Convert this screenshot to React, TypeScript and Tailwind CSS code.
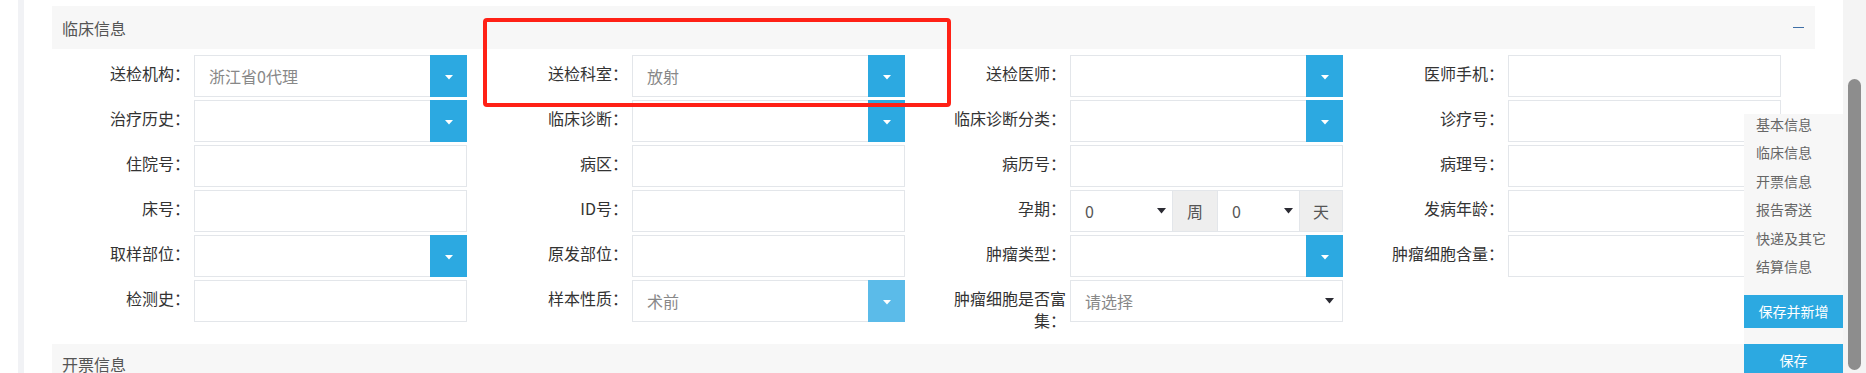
import React from 'react';

type Field =
  | { label: string; kind: 'text' }
  | { label: string; kind: 'dropdown'; value?: string; disabled?: boolean }
  | { label: string; kind: 'select'; placeholder: string }
  | { label: string; kind: 'pregnancy' }
  | { label: string; kind: 'empty' };

const rows: Field[][] = [
  [
    { label: '送检机构：', kind: 'dropdown', value: '浙江省0代理' },
    { label: '送检科室：', kind: 'dropdown', value: '放射' },
    { label: '送检医师：', kind: 'dropdown' },
    { label: '医师手机：', kind: 'text' },
  ],
  [
    { label: '治疗历史：', kind: 'dropdown' },
    { label: '临床诊断：', kind: 'dropdown' },
    { label: '临床诊断分类：', kind: 'dropdown' },
    { label: '诊疗号：', kind: 'text' },
  ],
  [
    { label: '住院号：', kind: 'text' },
    { label: '病区：', kind: 'text' },
    { label: '病历号：', kind: 'text' },
    { label: '病理号：', kind: 'text' },
  ],
  [
    { label: '床号：', kind: 'text' },
    { label: 'ID号：', kind: 'text' },
    { label: '孕期：', kind: 'pregnancy' },
    { label: '发病年龄：', kind: 'text' },
  ],
  [
    { label: '取样部位：', kind: 'dropdown' },
    { label: '原发部位：', kind: 'text' },
    { label: '肿瘤类型：', kind: 'dropdown' },
    { label: '肿瘤细胞含量：', kind: 'text' },
  ],
  [
    { label: '检测史：', kind: 'text' },
    { label: '样本性质：', kind: 'dropdown', value: '术前', disabled: true },
    { label: '肿瘤细胞是否富集：', kind: 'select', placeholder: '请选择' },
    { label: '', kind: 'empty' },
  ],
];

const navItems = ['基本信息', '临床信息', '开票信息', '报告寄送', '快递及其它', '结算信息'];

function WhiteCaret() {
  return (
    <svg width="8" height="5" viewBox="0 0 8 5" className="mt-[2px]">
      <path d="M0 0h8L4 4.5z" fill="#ffffff" />
    </svg>
  );
}

function DarkCaret() {
  return (
    <svg width="9" height="6" viewBox="0 0 9 6">
      <path d="M0 0h9L4.5 5.5z" fill="#2b2b33" />
    </svg>
  );
}

function Control({ field }: { field: Field }) {
  if (field.kind === 'empty') return null;

  if (field.kind === 'dropdown') {
    return (
      <div className="relative flex h-[42px] w-[273px] items-center border border-[#e3e6ea] bg-white">
        <span className="pl-[14px] text-[16px] text-[#888]">{field.value}</span>
        <div
          className={`absolute right-[-1px] top-[-1px] flex h-[42px] w-[37px] items-center justify-center ${
            field.disabled ? 'bg-[#5bbbe9]' : 'bg-[#2ca9e1]'
          }`}
        >
          <WhiteCaret />
        </div>
      </div>
    );
  }

  if (field.kind === 'select') {
    return (
      <div className="flex h-[42px] w-[273px] items-center justify-between border border-[#e3e6ea] bg-white pl-[14px] pr-[8px]">
        <span className="text-[16px] text-[#888]">{field.placeholder}</span>
        <DarkCaret />
      </div>
    );
  }

  if (field.kind === 'pregnancy') {
    return (
      <div className="flex h-[42px] w-[273px] border border-[#e3e6ea] bg-white">
        <div className="flex w-[101px] items-center justify-between pl-[14px] pr-[6px]">
          <span className="text-[16px] text-[#555]">0</span>
          <DarkCaret />
        </div>
        <div className="flex w-[46px] items-center justify-center border-x border-[#e3e6ea] bg-[#eeeeee] text-[16px] text-[#555]">
          周
        </div>
        <div className="flex w-[81px] items-center justify-between pl-[14px] pr-[6px]">
          <span className="text-[16px] text-[#555]">0</span>
          <DarkCaret />
        </div>
        <div className="flex flex-1 items-center justify-center border-l border-[#e3e6ea] bg-[#eeeeee] text-[16px] text-[#555]">
          天
        </div>
      </div>
    );
  }

  return <div className="h-[42px] w-[273px] border border-[#e3e6ea] bg-white" />;
}

export default function App() {
  return (
    <div
      className="relative flex h-[373px] w-full overflow-hidden bg-white"
      style={{ fontFamily: '"Noto Sans CJK SC", "Noto Sans", sans-serif' }}
    >
      {/* page edge */}
      <div className="w-[18px] shrink-0 bg-white" />
      <div className="w-[6px] shrink-0 bg-[#f1f2f5]" />

      <div className="flex-1 pl-[28px] pt-[6px]">
        {/* Section header */}
        <div className="flex h-[43px] w-[1763px] items-center justify-between bg-[#f7f7f7] pl-[10px] pr-[11px]">
          <span className="text-[16px] text-[#555]">临床信息</span>
          <div className="h-[1px] w-[11px] bg-[#3f6fa6]" />
        </div>

        {/* Form grid */}
        <div className="mt-[6px] grid w-[1752px] grid-cols-4 auto-rows-[42px] gap-y-[3px]">
          {rows.flat().map((field, i) => (
            <div key={i} className="flex items-start gap-[4px]">
              <label className="w-[138px] shrink-0 pt-[7px] text-right text-[16px] leading-[22px] text-[#333]">
                {field.label}
              </label>
              <Control field={field} />
            </div>
          ))}
        </div>

        <div className="mt-[22px] flex h-[43px] w-[1763px] items-start bg-[#f7f7f7] pl-[10px] pt-[9px]">
          <span className="text-[16px] leading-[22px] text-[#555]">开票信息</span>
        </div>
      </div>

      {/* Floating anchor nav */}
      <div className="absolute left-[1744px] top-[114px] flex h-[270px] w-[99px] flex-col bg-[#f7f7f7]">
        <div className="-mt-[2px] flex flex-col gap-[4.4px] pl-[12px]">
          {navItems.map((item) => (
            <span key={item} className="text-[14px] leading-[24px] text-[#666]">
              {item}
            </span>
          ))}
        </div>
        <button className="mt-[17px] h-[33px] w-full bg-[#2ca9e1] text-[14px] text-white">保存并新增</button>
        <button className="mt-[16px] h-[33px] w-full bg-[#2ca9e1] text-[14px] text-white">保存</button>
      </div>

      {/* Scrollbar */}
      <div className="absolute right-0 top-0 h-full w-[23px] bg-[#f4f4f4]">
        <div className="absolute left-[5px] top-[79px] h-[291px] w-[13px] rounded-full bg-[#8d8d8d]" />
      </div>

      {/* Red annotation box */}
      <div className="pointer-events-none absolute left-[483px] top-[18px] h-[89px] w-[468px] rounded-[4px] border-[4px] border-[#ff2116]" />
    </div>
  );
}
